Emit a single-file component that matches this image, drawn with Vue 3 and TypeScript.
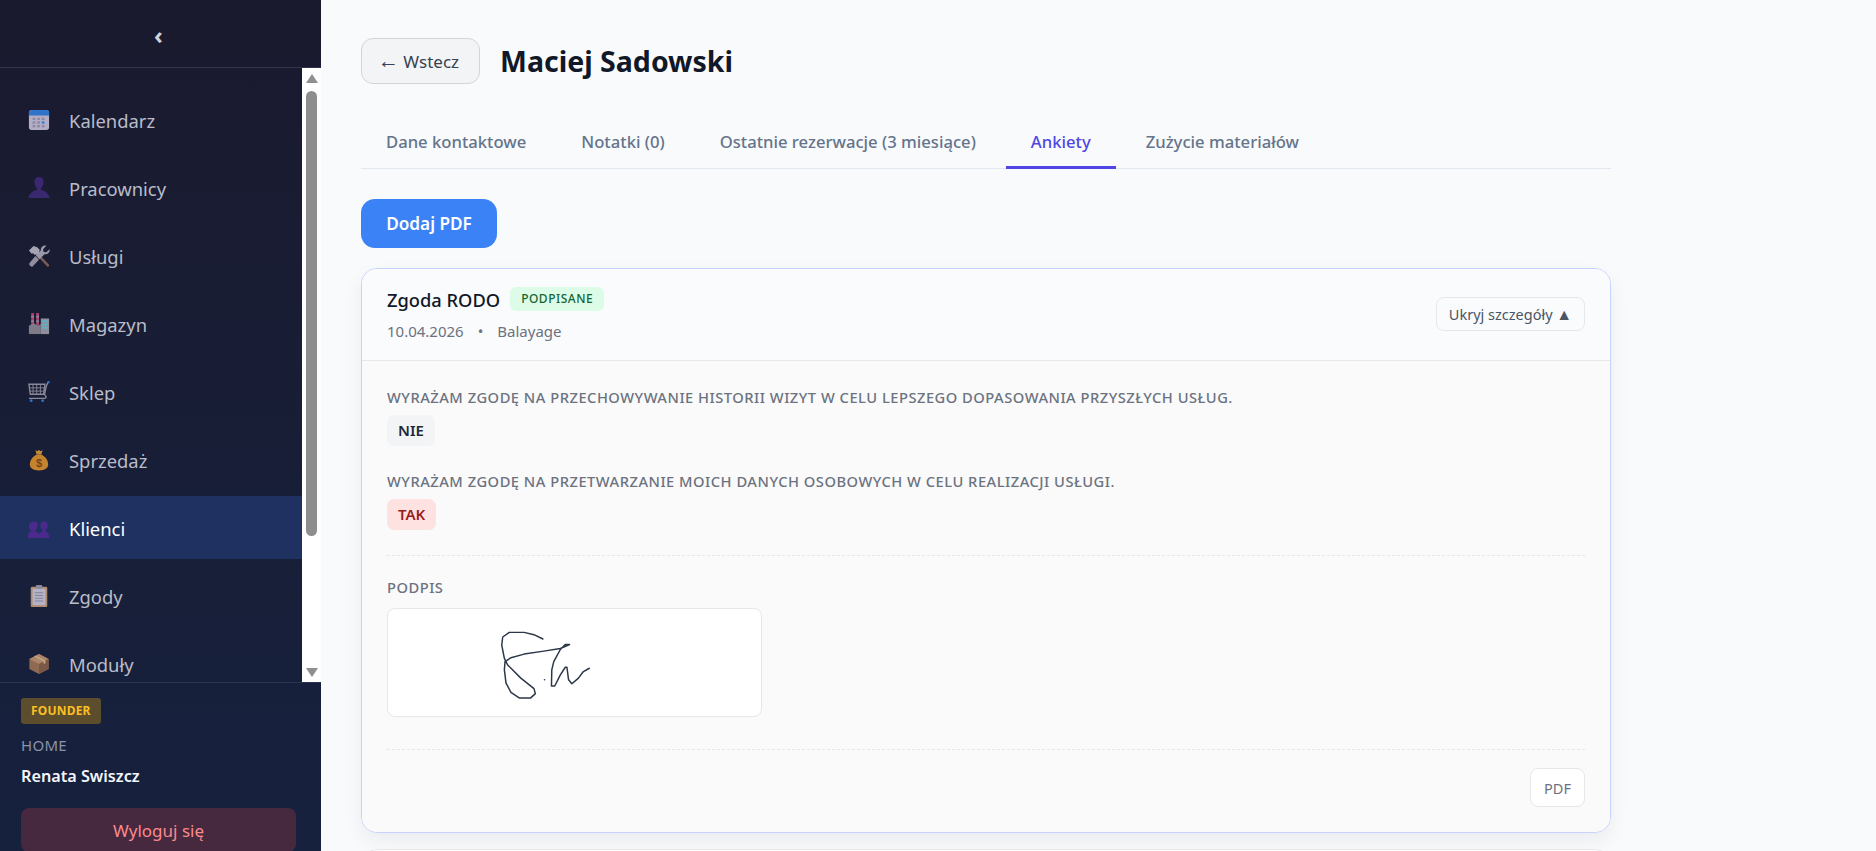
<script setup lang="ts">
interface NavItem {
  label: string
  icon: string
  active?: boolean
}

const navItems: NavItem[] = [
  { label: 'Kalendarz', icon: 'calendar' },
  { label: 'Pracownicy', icon: 'person' },
  { label: 'Usługi', icon: 'tools' },
  { label: 'Magazyn', icon: 'factory' },
  { label: 'Sklep', icon: 'cart' },
  { label: 'Sprzedaż', icon: 'money' },
  { label: 'Klienci', icon: 'people', active: true },
  { label: 'Zgody', icon: 'clipboard' },
  { label: 'Moduły', icon: 'box' },
]

const tabs = [
  { label: 'Dane kontaktowe' },
  { label: 'Notatki (0)' },
  { label: 'Ostatnie rezerwacje (3 miesiące)' },
  { label: 'Ankiety', active: true },
  { label: 'Zużycie materiałów' },
]

const answers = [
  {
    question: 'Wyrażam zgodę na przechowywanie historii wizyt w celu lepszego dopasowania przyszłych usług.',
    answer: 'NIE',
    yes: false,
  },
  {
    question: 'Wyrażam zgodę na przetwarzanie moich danych osobowych w celu realizacji usługi.',
    answer: 'TAK',
    yes: true,
  },
]
</script>

<template>
  <div class="layout">
    <aside class="sidebar">
      <div class="side-top"><button class="collapse">‹</button></div>
      <div class="nav-wrap">
        <nav class="nav">
          <a v-for="item in navItems" :key="item.label" class="nav-item" :class="{ active: item.active }">
            <svg class="nav-icon" viewBox="0 0 24 24" aria-hidden="true">
              <template v-if="item.icon === 'calendar'">
                <rect x="1" y="1" width="22" height="22" rx="3" fill="#b4adc6" />
                <path d="M1 7V4a3 3 0 0 1 3-3h16a3 3 0 0 1 3 3v3z" fill="#2f74c8" />
                <g fill="#8d89a3">
                  <rect x="5" y="9.500" width="3" height="2.500" /><rect x="10" y="9.500" width="3" height="2.500" /><rect x="15" y="9.500" width="3" height="2.500" />
                  <rect x="5" y="13.500" width="3" height="2.500" /><rect x="10" y="13.500" width="3" height="2.500" />
                  <rect x="5" y="17.500" width="3" height="2.500" /><rect x="10" y="17.500" width="3" height="2.500" /><rect x="15" y="17.500" width="3" height="2.500" />
                </g>
                <rect x="15" y="13.500" width="3" height="2.500" fill="#2f7fd8" />
              </template>
              <template v-else-if="item.icon === 'person'">
                <path d="M12 0c3.400 0 5 2.200 5 5.500 0 3-1.400 5.600-3 6.700v1.800c3.500 1 8.500 3 9.500 9H.5c1-6 6-8 9.500-9v-1.800C8.400 11.100 7 8.500 7 5.500 7 2.200 8.600 0 12 0z" fill="#3a2870" />
              </template>
              <template v-else-if="item.icon === 'tools'">
                <path d="M11 13l2.500 2.500L21 23.500c1 .5 2.500-1 2-2L15.500 13.500 13 11z" fill="#7d5a55" />
                <path d="M8 12l4 4-7 7.500c-1.500 1-4.500-2-3.500-3.500z" fill="#8f8d9e" />
                <path d="M1 6l5-5 4 1.500 3 3-1 1.500 1.500 1.500-3 3L9 10l-1.500 1-2-2L4 9.500z" fill="#a6a4b3" />
                <path d="M23.500 4.500L20 8l-3-.5L16.500 4.500 20 .8c-3-1-6.500 1.500-6 5.200L8.500 11.500l4 4L18 10c3.500.8 6.500-2.500 5.500-5.500z" fill="#9b99a9" />
              </template>
              <template v-else-if="item.icon === 'factory'">
                <rect x="3.500" y="0" width="3" height="14" fill="#a8436e" />
                <rect x="9" y="0" width="3" height="14" fill="#a8436e" />
                <g fill="#8c8a99"><rect x="3.500" y="3" width="3" height="2" /><rect x="9" y="3" width="3" height="2" /><rect x="3.500" y="8" width="3" height="2" /><rect x="9" y="8" width="3" height="2" /></g>
                <path d="M1 14l5-3 5 3 3-2v11H1z" fill="#7d7b88" />
                <rect x="14" y="6" width="9" height="17" fill="#8e8d9b" />
                <g fill="#5fb4c8"><rect x="15.500" y="8" width="6" height="2" /><rect x="15.500" y="11.500" width="6" height="2" /><rect x="15.500" y="15" width="6" height="2" /></g>
              </template>
              <template v-else-if="item.icon === 'cart'">
                <path d="M1 3.500h17.500l-1.500 11H2.500z" fill="none" stroke="#8a8998" stroke-width="1.500" />
                <path d="M5.500 3.500v11M9.500 3.500v11M13.500 3.500v11M1.500 7.500h16.500M2 11h15.500" stroke="#8a8998" stroke-width="1" fill="none" />
                <path d="M22 1l-2 4.500-2 9c1.500 2 3 3.500.5 4.500H1" fill="none" stroke="#8a8998" stroke-width="1.500" />
                <path d="M21.500 0h2v2.500h-2z" fill="#2f74c8" />
                <circle cx="3.500" cy="21.500" r="1.500" fill="#2f74c8" /><circle cx="16" cy="21.500" r="1.500" fill="#2f74c8" />
              </template>
              <template v-else-if="item.icon === 'money'">
                <path d="M8 1l2 1.500L12 1l2 1.500L16 1l-1.500 5h-5z" fill="#c48c38" />
                <path d="M9.500 6h5c4 2 7.500 6 7.500 11 0 4-3.500 6.500-10 6.500S2 21 2 17c0-5 3.500-9 7.500-11z" fill="#c4842e" />
                <text x="12" y="20" text-anchor="middle" font-size="12" font-weight="700" fill="#74461c" font-family="'Liberation Sans', sans-serif">$</text>
              </template>
              <template v-else-if="item.icon === 'people'">
                <path d="M6.500 5c2.500 0 4 1.800 4 4.300 0 2-.9 3.700-2 4.600v2.300c1.300.4 2.600.9 3.500 1.800.9-.9 2.200-1.400 3.500-1.800v-2.300c-1.100-.9-2-2.600-2-4.600 0-2.500 1.500-4.300 4-4.300s4 1.800 4 4.300c0 2-.9 3.700-2 4.600v2.300c1.700.5 3.500 1.400 3.500 6.800H-.5c0-5.400 1.800-6.300 3.500-6.800v-2.300c-1.100-.9-2-2.600-2-4.600C1 6.800 4 5 6.500 5z" fill="#4b2a8e" />
              </template>
              <template v-else-if="item.icon === 'clipboard'">
                <rect x="3" y="2" width="18" height="22" rx="1.500" fill="#b08c70" />
                <rect x="5" y="4" width="14" height="18" fill="#b4b2c6" />
                <rect x="8.500" y="0" width="7" height="4" rx="1" fill="#8b8a99" />
                <path d="M7.500 8.500h9M7.500 11.500h9M7.500 14.500h9M7.500 17.500h9" stroke="#85849a" stroke-width="1.200" />
              </template>
              <template v-else>
                <path d="M12 1l10.500 5.500v11L12 23 1.500 17.500v-11z" fill="#8f6a52" />
                <path d="M12 1l10.500 5.500L12 12 1.500 6.500z" fill="#ad8568" />
                <path d="M12 12v11l10.500-5.500v-11z" fill="#7a5845" />
                <path d="M6.500 3.600L17 9.300v3l2-1V8.200L8.500 2.600z" fill="#c3a285" />
              </template>
            </svg>
            <span>{{ item.label }}</span>
          </a>
        </nav>
        <div class="scrollbar">
          <span class="arrow up"></span>
          <span class="thumb"></span>
          <span class="arrow down"></span>
        </div>
      </div>
      <div class="side-foot">
        <span class="role">FOUNDER</span>
        <div class="salon">HOME</div>
        <div class="user">Renata Swiszcz</div>
        <button class="logout">Wyloguj się</button>
      </div>
    </aside>

    <main class="main">
      <div class="content">
        <header class="page-head">
          <button class="back"><span class="back-arrow">←</span> Wstecz</button>
          <h1>Maciej Sadowski</h1>
        </header>

        <div class="tabs">
          <button v-for="tab in tabs" :key="tab.label" class="tab" :class="{ active: tab.active }">{{ tab.label }}</button>
        </div>

        <button class="add">Dodaj PDF</button>

        <section class="card open">
          <div class="card-head">
            <div>
              <div class="title-row">
                <span class="card-title">Zgoda RODO</span>
                <span class="status">PODPISANE</span>
              </div>
              <div class="meta"><span>10.04.2026</span><span class="dot">•</span><span>Balayage</span></div>
            </div>
            <button class="toggle">Ukryj szczegóły <span class="caret">▲</span></button>
          </div>
          <div class="card-body">
            <div v-for="row in answers" :key="row.answer" class="answer-row">
              <div class="question">{{ row.question }}</div>
              <span class="answer" :class="{ yes: row.yes }">{{ row.answer }}</span>
            </div>
            <div class="signature-block">
              <div class="question">Podpis</div>
              <div class="signature">
                <svg viewBox="52 55 1122 325" aria-hidden="true">
                  <path d="M517 146 490 133 460 126H415L395 140 392 165 400 205 410 225 450 265 490 297 494 312 480 325H445L420 308 405 280 400 240 402 215 420 203 460 192 520 183 570 175 598 163H585L570 178 550 215 544 240 543 289H553L570 255 585 232H590L595 270 605 282 625 265 640 245 658 235" fill="none" stroke="#2b3648" stroke-width="4.500" stroke-linejoin="round" stroke-linecap="round" />
                  <circle cx="522" cy="270" r="2.500" fill="#2b3648" />
                </svg>
              </div>
            </div>
            <div class="card-actions"><button class="pdf">PDF</button></div>
          </div>
        </section>

        <section class="card next"></section>
      </div>
    </main>
  </div>
</template>

<style scoped>
.layout {
  display: flex;
  height: 851px;
  overflow: hidden;
  background: #f9fafc;
  font-family: "Noto Sans", "Open Sans", sans-serif;
}

button {
  font-family: inherit;
  cursor: pointer;
}

.sidebar {
  flex: 0 0 321px;
  display: flex;
  flex-direction: column;
  height: 851px;
  background: linear-gradient(180deg, #1a1a2e, #16213e);
}

.side-top {
  flex: 0 0 68px;
  display: flex;
  align-items: center;
  justify-content: center;
  border-bottom: 1px solid #33344a;
  box-sizing: border-box;
}

.collapse {
  background: none;
  border: 0;
  padding: 0 4px 0 0;
  color: #d2d3db;
  font-size: 24px;
  font-weight: 700;
  line-height: 1;
  margin-top: 2px;
}

.nav-wrap {
  flex: 0 0 614px;
  display: flex;
  overflow: hidden;
}

.nav {
  flex: 1;
  display: flex;
  flex-direction: column;
  gap: 5px;
  padding-top: 20px;
}

.nav-item {
  flex: 0 0 63px;
  display: flex;
  align-items: center;
  gap: 19px;
  padding-left: 28px;
  color: #b9bcc9;
  font-size: 18.4px;
}

.nav-item span {
  padding-top: 2px;
}

.nav-item.active {
  background: #1e3160;
  color: #fff;
}

.nav-icon {
  width: 22px;
  height: 22px;
  flex: none;
  overflow: hidden;
}

.scrollbar {
  flex: 0 0 19px;
  display: flex;
  flex-direction: column;
  align-items: center;
  background: #fff;
}

.arrow {
  width: 0;
  height: 0;
  border-left: 6.5px solid transparent;
  border-right: 6.5px solid transparent;
}

.arrow.up {
  margin-top: 6px;
  border-bottom: 9px solid #8f8f8f;
}

.arrow.down {
  margin-top: auto;
  margin-bottom: 5px;
  border-top: 9px solid #8f8f8f;
}

.thumb {
  width: 11px;
  height: 445px;
  margin-top: 8px;
  border-radius: 6px;
  background: #8e8e8e;
}

.side-foot {
  flex: 1;
  border-top: 1px solid #2a3450;
  padding: 15px 25px 0 21px;
}

.role {
  display: inline-block;
  padding: 0 10px;
  height: 26px;
  line-height: 26px;
  border-radius: 3px;
  background: #5c4d2c;
  color: #fbbf24;
  font-size: 12px;
  font-weight: 700;
  letter-spacing: 0.2px;
}

.salon {
  margin-top: 11px;
  color: #8a93a8;
  font-size: 15px;
  letter-spacing: 0.3px;
  line-height: 20px;
}

.user {
  margin-top: 10px;
  color: #f4f6fb;
  font-size: 16.2px;
  font-weight: 600;
  line-height: 22px;
}

.logout {
  display: block;
  width: 100%;
  height: 44px;
  margin-top: 21px;
  border: 0;
  border-radius: 8px;
  background: #46283f;
  color: #fb8a8a;
  font-size: 17px;
}

.main {
  flex: 1;
  min-width: 0;
  overflow: hidden;
  padding: 38px 0 0 40px;
}

.content {
  width: 1250px;
}

.page-head {
  display: flex;
  align-items: center;
  gap: 20px;
}

.back {
  width: 119px;
  height: 46px;
  padding: 0 4px 0 0;
  border: 1px solid #d1d5db;
  border-radius: 12px;
  background: #f3f4f6;
  color: #374151;
  font-size: 17px;
}

.back-arrow {
  font-family: "Liberation Sans", sans-serif;
  font-size: 21px;
  line-height: 1;
}

h1 {
  margin: 0;
  color: #111827;
  font-size: 28.5px;
  font-weight: 700;
}

.tabs {
  display: flex;
  gap: 5px;
  margin-top: 25px;
  border-bottom: 1px solid #e2e8f0;
}

.tab {
  height: 60px;
  padding: 7px 25px 0;
  border: 0;
  margin-bottom: -1px;
  border-bottom: 3px solid transparent;
  background: none;
  color: #64748b;
  font-size: 16.65px;
  font-weight: 500;
}

.tab.active {
  border-bottom-color: #4f46e5;
  color: #4f46e5;
}

.add {
  display: block;
  width: 136px;
  height: 49px;
  margin-top: 30px;
  padding: 0;
  border: 0;
  border-radius: 14px;
  background: #3b82f6;
  color: #fff;
  font-size: 17.2px;
  font-weight: 600;
}

.card {
  box-sizing: border-box;
  border: 1px solid #e5e7eb;
  border-radius: 16px;
  background: #fff;
}

.card.open {
  margin-top: 20px;
  height: 565px;
  overflow: hidden;
  border-color: #c7d2fe;
  box-shadow: 0 8px 20px rgba(15, 23, 42, 0.06);
}

.card.next {
  height: 60px;
  margin-top: 16px;
}

.card-head {
  box-sizing: border-box;
  height: 92px;
  display: flex;
  align-items: center;
  justify-content: space-between;
  padding: 0 25px 2px;
  border-bottom: 1px solid #e5e7eb;
  background: #fafbfd;
}

.title-row {
  display: flex;
  align-items: center;
  gap: 10px;
}

.card-title {
  color: #111827;
  font-size: 18.3px;
  font-weight: 500;
}

.status {
  height: 24px;
  line-height: 24px;
  padding: 0 11px;
  border-radius: 6px;
  background: #dcfce7;
  color: #166534;
  font-size: 12px;
  font-weight: 500;
  letter-spacing: 0.5px;
}

.meta {
  display: flex;
  gap: 14px;
  margin-top: 9px;
  color: #6b7280;
  font-size: 15px;
}

.toggle {
  width: 149px;
  height: 34px;
  padding: 0;
  border: 1px solid #e5e7eb;
  border-radius: 8px;
  background: #fafbfd;
  color: #4b5563;
  font-size: 14.5px;
}

.caret {
  font-size: 16px;
  line-height: 1;
}

.card-body {
  height: 472px;
  box-sizing: border-box;
  padding: 26px 25px 0;
  background: #fafafa;
}

.answer-row {
  margin-bottom: 25px;
}

.question {
  color: #6b7280;
  font-size: 14.7px;
  font-weight: 500;
  letter-spacing: 0.5px;
  line-height: 20px;
  text-transform: uppercase;
}

.answer {
  display: inline-block;
  margin-top: 8px;
  padding: 0 11px;
  height: 31px;
  line-height: 31px;
  border-radius: 7px;
  background: #f3f4f6;
  color: #1f2937;
  font-size: 15px;
  font-weight: 600;
}

.answer.yes {
  background: #fee2e2;
  color: #991b1b;
}

.signature-block {
  padding-top: 21px;
  border-top: 1px dashed #e5e7eb;
}

.signature {
  box-sizing: border-box;
  width: 375px;
  height: 109px;
  margin-top: 11px;
  border: 1px solid #e5e7eb;
  border-radius: 8px;
  background: #fff;
  overflow: hidden;
}

.signature svg {
  display: block;
  width: 100%;
  height: 100%;
}

.card-actions {
  display: flex;
  justify-content: flex-end;
  margin-top: 32px;
  padding-top: 18px;
  border-top: 1px dashed #e5e7eb;
}

.pdf {
  width: 55px;
  height: 39px;
  padding: 0;
  border: 1px solid #e5e7eb;
  border-radius: 8px;
  background: #fff;
  color: #6b7280;
  font-size: 14.5px;
}
</style>

<style>
html,
body {
  margin: 0;
  overflow: hidden;
}
</style>
